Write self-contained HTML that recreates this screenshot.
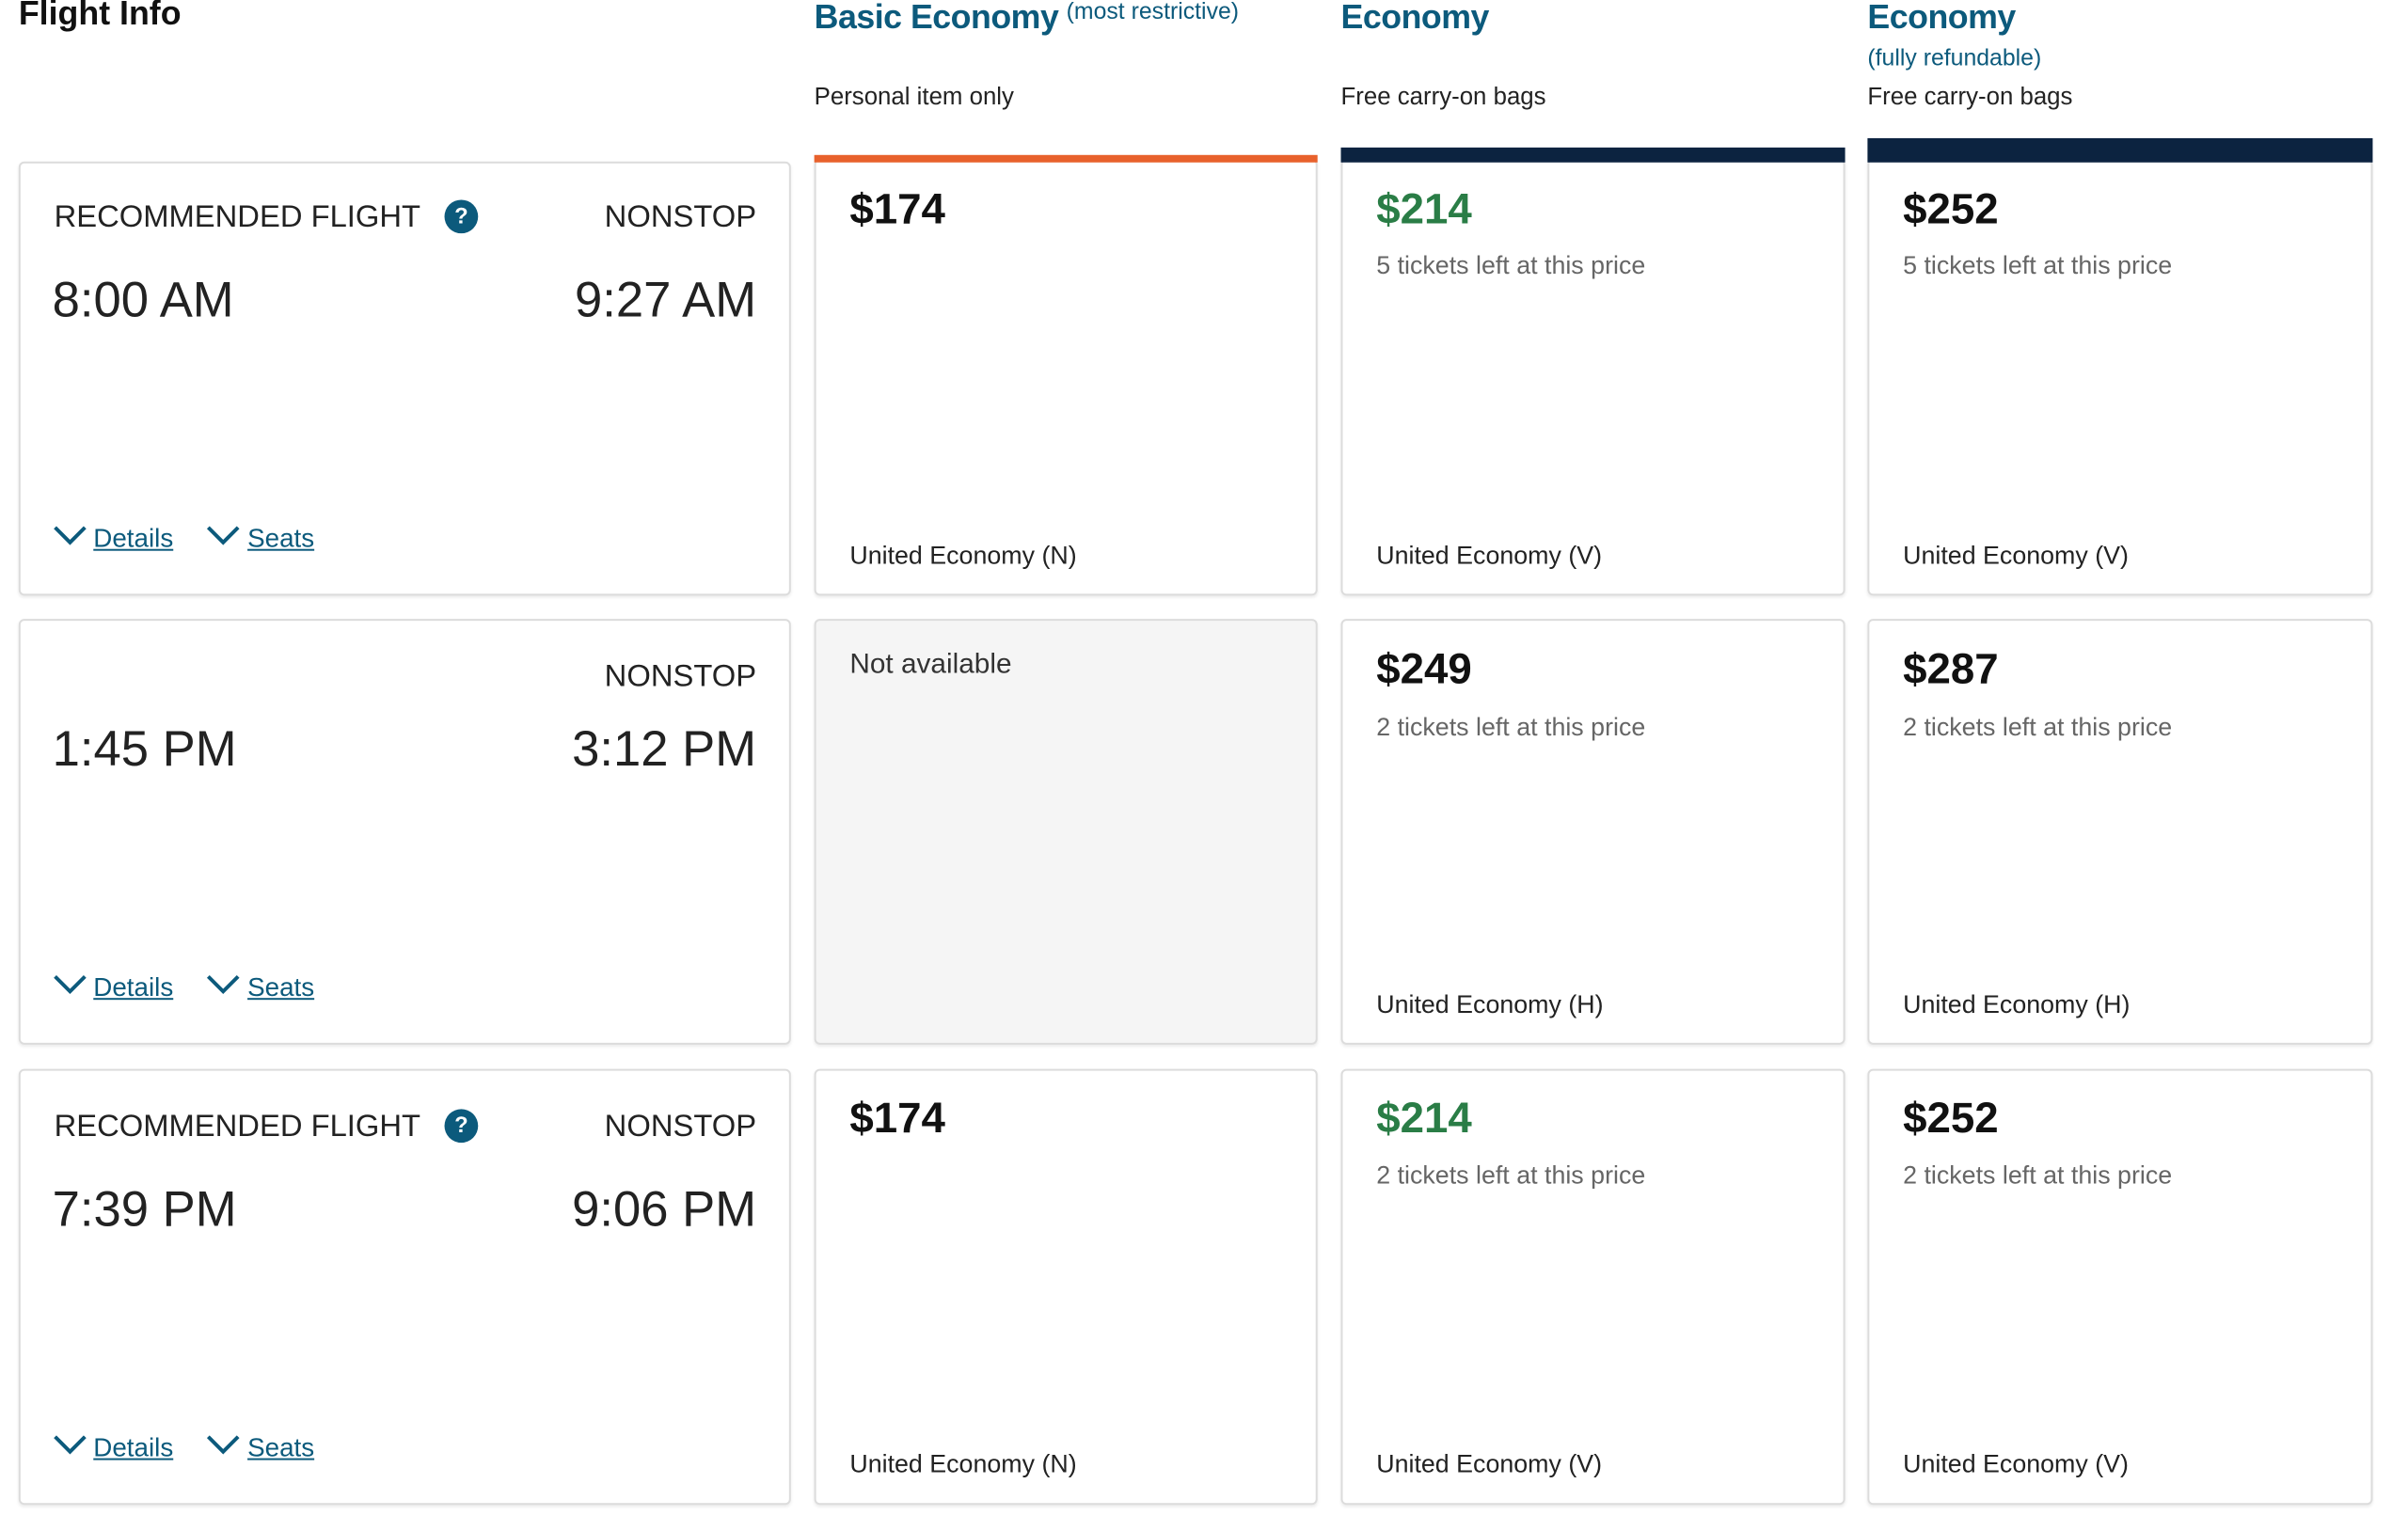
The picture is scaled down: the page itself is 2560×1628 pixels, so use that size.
<!DOCTYPE html>
<html><head><meta charset="utf-8"><style>
body{margin:0;width:2560px;height:1628px;background:#fff;position:relative;overflow:hidden;font-family:"Liberation Sans",sans-serif;color:#222}
#w{position:absolute;left:0;top:0;width:2580px;height:1640px;transform:scale(0.9927);transform-origin:0 0}
.a{position:absolute;line-height:1;white-space:nowrap}
.card{position:absolute;border:2px solid #dcdcdc;border-radius:6px;box-sizing:border-box;background:#fff;box-shadow:0 2px 3px rgba(0,0,0,.08)}
.bar{position:absolute}
.h{font-size:36px;font-weight:bold;color:#0c5a7c;letter-spacing:-0.5px}
.sub{font-size:26px;color:#222}
.rec{font-size:33px;color:#222}
.tm{font-size:53px;color:#222;font-weight:300}
.lk{font-size:28px;color:#0c5a7c;text-decoration:underline}
.pr{font-size:46px;font-weight:bold;color:#111}
.g{color:#2a7d46}
.tk{font-size:27px;color:#666}
.ue{font-size:27px;color:#222}
.q{position:absolute;width:36px;height:36px;border-radius:50%;background:#0c5a7c;color:#fff;font-size:24px;font-weight:bold;text-align:center;line-height:36px}
</style></head><body><div id="w">
<div class="a" style="left:20px;top:-4px;font-size:36px;font-weight:bold;color:#111">Flight Info</div>
<div class="a h" style="left:872px;top:0">Basic Economy</div>
<div class="a" style="left:1142px;top:0;font-size:25px;color:#0c5a7c">(most restrictive)</div>
<div class="a h" style="left:1436px;top:0">Economy</div>
<div class="a h" style="left:2000px;top:0">Economy</div>
<div class="a" style="left:2000px;top:50px;font-size:25px;color:#0c5a7c">(fully refundable)</div>
<div class="a sub" style="left:872px;top:90px">Personal item only</div>
<div class="a sub" style="left:1436px;top:90px">Free carry-on bags</div>
<div class="a sub" style="left:2000px;top:90px">Free carry-on bags</div>

<div class="card" style="left:20px;top:173px;width:827px;height:465px"></div>
<div class="card" style="left:872px;top:170px;width:539px;height:468px"></div>
<div class="bar" style="left:872px;top:166px;width:539px;height:8px;background:#e8612c"></div>
<div class="card" style="left:1436px;top:170px;width:540px;height:468px"></div>
<div class="bar" style="left:1436px;top:158px;width:540px;height:16px;background:#0c2340"></div>
<div class="card" style="left:2000px;top:170px;width:541px;height:468px"></div>
<div class="bar" style="left:2000px;top:148px;width:541px;height:26px;background:#0c2340"></div>

<div class="card" style="left:20px;top:663px;width:827px;height:456px"></div>
<div class="card" style="left:872px;top:663px;width:539px;height:456px;background:#f5f5f5"></div>
<div class="card" style="left:1436px;top:663px;width:540px;height:456px"></div>
<div class="card" style="left:2000px;top:663px;width:541px;height:456px"></div>

<div class="card" style="left:20px;top:1145px;width:827px;height:467px"></div>
<div class="card" style="left:872px;top:1145px;width:539px;height:467px"></div>
<div class="card" style="left:1436px;top:1145px;width:540px;height:467px"></div>
<div class="card" style="left:2000px;top:1145px;width:541px;height:467px"></div>

<div class="a rec" style="left:58px;top:215px">RECOMMENDED FLIGHT</div>
<div class="q" style="left:476px;top:214px">?</div>
<div class="a rec" style="right:1770px;top:215px">NONSTOP</div>
<div class="a tm" style="left:56px;top:295px">8:00 AM</div>
<div class="a tm" style="right:1770px;top:295px">9:27 AM</div>
<div class="a rec" style="right:1770px;top:707px">NONSTOP</div>
<div class="a tm" style="left:56px;top:776px">1:45 PM</div>
<div class="a tm" style="right:1770px;top:776px">3:12 PM</div>
<div class="a rec" style="left:58px;top:1189px">RECOMMENDED FLIGHT</div>
<div class="q" style="left:476px;top:1188px">?</div>
<div class="a rec" style="right:1770px;top:1189px">NONSTOP</div>
<div class="a tm" style="left:56px;top:1269px">7:39 PM</div>
<div class="a tm" style="right:1770px;top:1269px">9:06 PM</div>

<svg class="a" style="left:56px;top:562px" width="40" height="24"><path d="M3 3 L19 19 L35 3" fill="none" stroke="#0c5a7c" stroke-width="4"/></svg>
<div class="a lk" style="left:100px;top:563px">Details</div>
<svg class="a" style="left:220px;top:562px" width="40" height="24"><path d="M3 3 L19 19 L35 3" fill="none" stroke="#0c5a7c" stroke-width="4"/></svg>
<div class="a lk" style="left:265px;top:563px">Seats</div>

<svg class="a" style="left:56px;top:1043px" width="40" height="24"><path d="M3 3 L19 19 L35 3" fill="none" stroke="#0c5a7c" stroke-width="4"/></svg>
<div class="a lk" style="left:100px;top:1044px">Details</div>
<svg class="a" style="left:220px;top:1043px" width="40" height="24"><path d="M3 3 L19 19 L35 3" fill="none" stroke="#0c5a7c" stroke-width="4"/></svg>
<div class="a lk" style="left:265px;top:1044px">Seats</div>

<svg class="a" style="left:56px;top:1536px" width="40" height="24"><path d="M3 3 L19 19 L35 3" fill="none" stroke="#0c5a7c" stroke-width="4"/></svg>
<div class="a lk" style="left:100px;top:1537px">Details</div>
<svg class="a" style="left:220px;top:1536px" width="40" height="24"><path d="M3 3 L19 19 L35 3" fill="none" stroke="#0c5a7c" stroke-width="4"/></svg>
<div class="a lk" style="left:265px;top:1537px">Seats</div>

<div class="a pr" style="left:910px;top:200px">$174</div>
<div class="a ue" style="left:910px;top:582px">United Economy (N)</div>
<div class="a pr g" style="left:1474px;top:200px">$214</div>
<div class="a tk" style="left:1474px;top:271px">5 tickets left at this price</div>
<div class="a ue" style="left:1474px;top:582px">United Economy (V)</div>
<div class="a pr" style="left:2038px;top:200px">$252</div>
<div class="a tk" style="left:2038px;top:271px">5 tickets left at this price</div>
<div class="a ue" style="left:2038px;top:582px">United Economy (V)</div>
<div class="a" style="left:910px;top:697px;font-size:30px;color:#333">Not available</div>
<div class="a pr" style="left:1474px;top:693px">$249</div>
<div class="a tk" style="left:1474px;top:766px">2 tickets left at this price</div>
<div class="a ue" style="left:1474px;top:1063px">United Economy (H)</div>
<div class="a pr" style="left:2038px;top:693px">$287</div>
<div class="a tk" style="left:2038px;top:766px">2 tickets left at this price</div>
<div class="a ue" style="left:2038px;top:1063px">United Economy (H)</div>
<div class="a pr" style="left:910px;top:1174px">$174</div>
<div class="a ue" style="left:910px;top:1555px">United Economy (N)</div>
<div class="a pr g" style="left:1474px;top:1174px">$214</div>
<div class="a tk" style="left:1474px;top:1246px">2 tickets left at this price</div>
<div class="a ue" style="left:1474px;top:1555px">United Economy (V)</div>
<div class="a pr" style="left:2038px;top:1174px">$252</div>
<div class="a tk" style="left:2038px;top:1246px">2 tickets left at this price</div>
<div class="a ue" style="left:2038px;top:1555px">United Economy (V)</div>
</div></body></html>
